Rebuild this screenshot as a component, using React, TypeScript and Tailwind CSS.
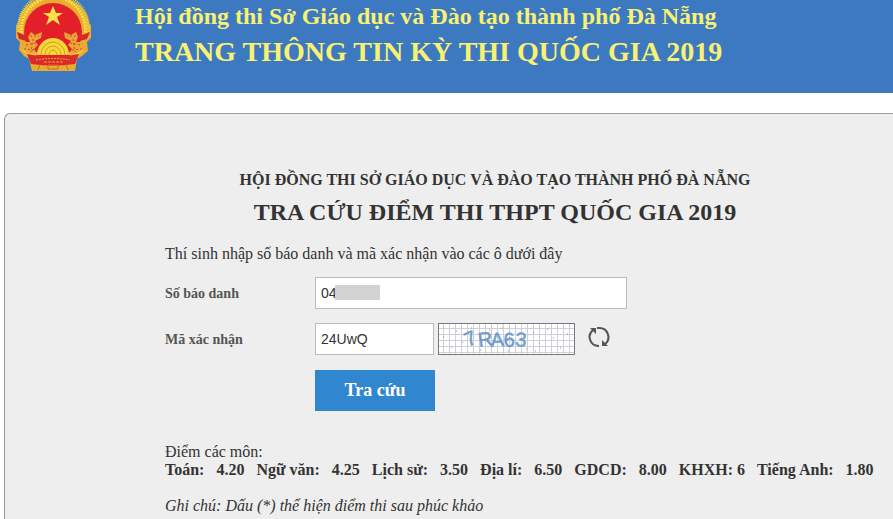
import React from 'react';

const scores = [
  { subject: 'Toán', score: '4.20' },
  { subject: 'Ngữ văn', score: '4.25' },
  { subject: 'Lịch sử', score: '3.50' },
  { subject: 'Địa lí', score: '6.50' },
  { subject: 'GDCD', score: '8.00' },
  { subject: 'KHXH', score: '6', tight: true },
  { subject: 'Tiếng Anh', score: '1.80' },
];

const Emblem: React.FC = () => (
  <svg viewBox="13 0 80 74" className="h-[74px] w-20 shrink-0" aria-hidden="true">
    <path
      d="M53 -4 C74 -4 88 10 89 24 L91 25 V38 L87 42 L88 51 L82 56 L77 59 L75 71 H32 L29 59 L24 56 L19 50 L20 42 L16 38 V25 L18 24 C19 10 33 -4 53 -4 Z"
      fill="#e8ac30"
    />
    <path d="M22 36 A32 33 0 1 1 85 36" fill="none" stroke="#f9e04a" strokeWidth="3" strokeDasharray="2 1" />
    <path d="M19 34 A35 35 0 1 1 88 34" fill="none" stroke="#f6d640" strokeWidth="3" strokeDasharray="1 1" />
    <circle cx="53" cy="32" r="29" fill="#e3202a" />
    <path d="M53 6 L56 13 L63 13 L57 17 L60 25 L53 20 L46 25 L49 17 L43 13 L50 13 Z" fill="#fbe14a" />
    <path d="M17 32 L27 36 L30 42 L19 39 Z M90 32 L79 36 L76 42 L87 39 Z" fill="#d8262a" />
    <path d="M31 32 L35 35 L42 32 L41 38 L35 41 L38 45 L34 49 L37 53 L24 54 L22 42 L30 42 L28 37 Z" fill="#eba637" />
    <path d="M76 32 L71 35 L64 32 L65 38 L71 41 L68 45 L72 49 L69 53 L82 54 L84 42 L76 42 L78 37 Z" fill="#eba637" />
    <g fill="none" stroke="#cf4a26" strokeDasharray="2 2">
      <path d="M30 36 L39 36 M26 45 L36 43 M24 49 L34 50 M33 39 L31 52" />
      <path d="M76 36 L67 36 M80 45 L70 43 M82 49 L72 50 M73 39 L75 52" />
    </g>
    <path d="M37 55 A16 17 0 0 1 69 55 Z" fill="#f6d836" />
    <g fill="none" stroke="#d39a2a">
      <path d="M41 55 A12 13 0 0 1 65 55" />
      <path d="M45 55 A8 9 0 0 1 61 55" />
      <path d="M49 55 A4 5 0 0 1 57 55" />
    </g>
    <path d="M23 50 Q29 57 39 53 M83 50 Q77 57 67 53" fill="none" stroke="#f3c23c" strokeWidth="2" />
    <path d="M27 54 Q53 60 79 54 L75 64 Q53 67 31 64 Z" fill="#dc2a2a" />
    <path d="M36 60 Q53 57 70 60" fill="none" stroke="#f0a040" strokeDasharray="2 1" />
    <path d="M44 62 H63" fill="none" stroke="#f0a040" strokeDasharray="3 1" />
    <path d="M40 64 L38 70 M66 64 L68 70 M48 65 H58 V69 H48 Z" fill="none" stroke="#d8602c" />
  </svg>
);

const Captcha: React.FC = () => (
  <svg viewBox="0 0 137 32" className="h-8 w-[137px]" role="img" aria-label="Mã xác nhận">
    <defs>
      <pattern id="grid" width="6" height="6" patternUnits="userSpaceOnUse">
        <path d="M5.5 0 V6 M0 5.5 H6" stroke="#cfcfd6" fill="none" />
      </pattern>
    </defs>
    <rect width="137" height="32" fill="#fff" />
    <rect width="137" height="32" fill="url(#grid)" />
    <path
      d="M5 14h1M18 8h1M13 24h1M24 19h1M33 5h1M42 27h1M51 7h1M64 5h1M70 28h1M88 26h1M95 10h1M101 20h1M109 6h1M115 15h1M122 25h1M129 11h1M97 28h1"
      stroke="#8b8ba8"
      fill="none"
    />
    <text
      x="30 41 53 66 77"
      y="24 24 24 24 23"
      rotate="-24 -8 -4 -3 4"
      fill="#6f9bd0"
      stroke="#6f9bd0"
      strokeWidth="0.5"
      fontSize="20"
      fontFamily="Liberation Sans, Arial, sans-serif"
    >
      7RA63
    </text>
    <rect x="0.5" y="0.5" width="136" height="31" fill="none" stroke="#77777c" />
  </svg>
);

const RefreshIcon: React.FC = () => (
  <svg viewBox="0 0 22 22" className="size-[22px]" fill="none" stroke="#555" strokeWidth="2" aria-hidden="true">
    <path d="M5 4 A9 9 0 0 0 11 20" />
    <path d="M17 18 A9 9 0 0 0 11 2 L9 2" />
    <path d="M2 2 H8 V8 Z M20 20 H14 V14 Z" fill="#555" stroke="none" />
  </svg>
);

const App: React.FC = () => {
  return (
    <div className="flex min-h-screen flex-col overflow-hidden bg-white font-['Liberation_Serif','Times_New_Roman',serif] text-[#333]">
      <header className="flex h-[93px] items-start bg-[#3d79c1] pl-[13px] text-[#f8f171]">
        <Emblem />
        <div className="pl-[42px] font-bold whitespace-nowrap">
          <p className="text-[24px] leading-8">Hội đồng thi Sở Giáo dục và Đào tạo thành phố Đà Nẵng</p>
          <p className="pt-0.5 text-[28px] leading-9">TRANG THÔNG TIN KỲ THI QUỐC GIA 2019</p>
        </div>
      </header>

      <main className="mt-5 ml-1 flex-1 rounded-tl-md border-t border-l border-[#999] bg-[#eee] pl-40">
        <div className="max-w-[660px] pt-14">
          <div className="text-center font-bold whitespace-nowrap">
            <h2 className="text-[16px] leading-5">HỘI ĐỒNG THI SỞ GIÁO DỤC VÀ ĐÀO TẠO THÀNH PHỐ ĐÀ NẴNG</h2>
            <h1 className="pt-2 text-[24px] leading-7">TRA CỨU ĐIỂM THI THPT QUỐC GIA 2019</h1>
          </div>

          <form className="pt-[18px]" onSubmit={(e) => e.preventDefault()}>
            <p className="text-[16px] leading-5">Thí sinh nhập số báo danh và mã xác nhận vào các ô dưới đây</p>

            <div className="mt-[13px] flex items-center">
              <label htmlFor="sbd" className="w-[150px] text-[14px] font-bold text-[#555]">
                Số báo danh
              </label>
              <div className="relative">
                <input
                  id="sbd"
                  defaultValue="04"
                  className="block h-8 w-[312px] border border-[#bbb] bg-white px-[5px] font-['Liberation_Sans',Arial,sans-serif] text-[14px] outline-none"
                />
                <span className="absolute top-2 left-5 h-[15px] w-[45px] bg-[#d2d2d2]" />
              </div>
            </div>

            <div className="mt-3.5 flex items-center">
              <label htmlFor="captcha" className="w-[150px] text-[14px] font-bold text-[#555]">
                Mã xác nhận
              </label>
              <input
                id="captcha"
                defaultValue="24UwQ"
                className="block h-8 w-[119px] border border-[#bbb] bg-white px-[5px] font-['Liberation_Sans',Arial,sans-serif] text-[14px] outline-none"
              />
              <div className="ml-1">
                <Captcha />
              </div>
              <button type="button" aria-label="Đổi mã" className="ml-[13px] pb-1">
                <RefreshIcon />
              </button>
            </div>

            <button type="submit" className="mt-[15px] ml-[150px] h-[41px] w-[120px] bg-[#3187cf] text-[18px] font-bold text-white">
              Tra cứu
            </button>
          </form>

          <section className="pt-8 text-[16px] leading-[18px]">
            <p>Điểm các môn:</p>
            <ul className="flex gap-3 font-bold whitespace-nowrap">
              {scores.map(({ subject, score, tight }) => (
                <li key={subject} className={tight ? 'flex gap-1' : 'flex gap-3'}>
                  <span>{subject}:</span>
                  <span>{score}</span>
                </li>
              ))}
            </ul>
            <p className="pt-[18px] italic">Ghi chú: Dấu (*) thể hiện điểm thi sau phúc khảo</p>
          </section>
        </div>
      </main>
    </div>
  );
};

export default App;
